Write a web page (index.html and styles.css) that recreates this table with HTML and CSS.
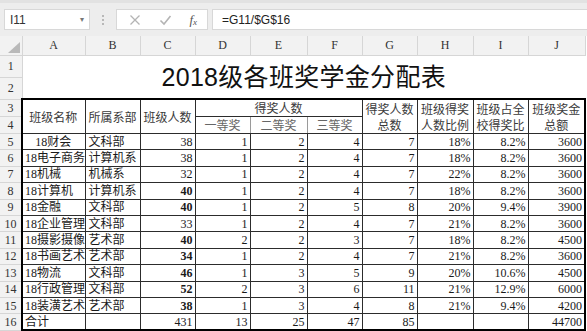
FILE: index.html
```html
<!DOCTYPE html>
<html lang="zh-CN">
<head>
<meta charset="utf-8">
<title>2018级各班奖学金分配表</title>
<link rel="stylesheet" href="styles.css">
</head>
<body>
<div class="app">
  <div class="toolbar">
    <div class="namebox"><span>I11</span><span class="caret">▾</span></div>
    <div class="grip"><span></span><span></span><span></span></div>
    <div class="fxbox">
      <svg width="12" height="12" viewBox="0 0 12 12"><path d="M1.5 1.5 L10.5 10.5 M10.5 1.5 L1.5 10.5" stroke="#b4b4b4" stroke-width="1.3" fill="none"/></svg>
      <svg width="13" height="12" viewBox="0 0 13 12"><path d="M1.5 6.5 L5 10 L11.5 2" stroke="#b4b4b4" stroke-width="1.6" fill="none"/></svg>
      <span class="fx">f<sub>x</sub></span>
    </div>
    <div class="formula">=G11/$G$16</div>
  </div>
  <table class="sheet">
    <colgroup>
      <col class="c-rn"><col class="c-a"><col class="c-b"><col class="c-b"><col class="c-b"><col class="c-e"><col class="c-b"><col class="c-b"><col class="c-h"><col class="c-b"><col class="c-e">
    </colgroup>
    <tr class="hdr">
      <th class="corner"><svg width="12" height="11" viewBox="0 0 12 11"><path d="M12 0 L12 11 L0 11 Z" fill="#b9b9b9"/></svg></th>
      <th>A</th><th>B</th><th>C</th><th>D</th><th>E</th><th>F</th><th>G</th><th>H</th><th>I</th><th>J</th>
    </tr>
    <tr class="tr">
      <td class="rn">1</td>
      <td class="title" colspan="10" rowspan="2">2018级各班奖学金分配表</td>
    </tr>
    <tr class="tr">
      <td class="rn">2</td>
    </tr>
    <tr class="dr">
      <td class="rn">3</td>
      <td class="h l t" rowspan="2">班级名称</td>
      <td class="h t" rowspan="2">所属系部</td>
      <td class="h t" rowspan="2">班级人数</td>
      <td class="h t sub-top" colspan="3">得奖人数</td>
      <td class="h t" rowspan="2">得奖人数<br>总数</td>
      <td class="h t" rowspan="2">班级得奖<br>人数比例</td>
      <td class="h t" rowspan="2">班级占全<br>校得奖比</td>
      <td class="h t r" rowspan="2">班级奖金<br>总额</td>
    </tr>
    <tr class="dr">
      <td class="rn">4</td>
      <td class="h sub">一等奖</td>
      <td class="h sub">二等奖</td>
      <td class="h sub">三等奖</td>
    </tr>
    <tr class="dr">
      <td class="rn">5</td><td class="l ctr">18财会</td><td class="gb">文科部</td><td class="n">38</td><td class="n">1</td><td class="n">2</td><td class="n gb">4</td><td class="n">7</td><td class="n">18%</td><td class="n">8.2%</td><td class="n r">3600</td>
    </tr>
    <tr class="dr">
      <td class="rn">6</td><td class="l">18电子商务</td><td class="gb">计算机系</td><td class="n">38</td><td class="n">1</td><td class="n">2</td><td class="n gb">4</td><td class="n">7</td><td class="n">18%</td><td class="n">8.2%</td><td class="n r">3600</td>
    </tr>
    <tr class="dr">
      <td class="rn">7</td><td class="l">18机械</td><td class="gb">机械系</td><td class="n">32</td><td class="n">1</td><td class="n">2</td><td class="n gb">4</td><td class="n">7</td><td class="n">22%</td><td class="n">8.2%</td><td class="n r">3600</td>
    </tr>
    <tr class="dr">
      <td class="rn">8</td><td class="l">18计算机</td><td class="gb">计算机系</td><td class="n bd">40</td><td class="n">1</td><td class="n">2</td><td class="n gb">4</td><td class="n">7</td><td class="n">18%</td><td class="n">8.2%</td><td class="n r">3600</td>
    </tr>
    <tr class="dr">
      <td class="rn">9</td><td class="l">18金融</td><td class="gb">文科部</td><td class="n bd">40</td><td class="n">1</td><td class="n">2</td><td class="n gb">5</td><td class="n">8</td><td class="n">20%</td><td class="n">9.4%</td><td class="n r">3900</td>
    </tr>
    <tr class="dr">
      <td class="rn">10</td><td class="l">18企业管理</td><td class="gb">文科部</td><td class="n">33</td><td class="n">1</td><td class="n">2</td><td class="n gb">4</td><td class="n">7</td><td class="n">21%</td><td class="n">8.2%</td><td class="n r">3600</td>
    </tr>
    <tr class="dr">
      <td class="rn">11</td><td class="l">18摄影摄像</td><td class="gb">艺术部</td><td class="n bd">40</td><td class="n">2</td><td class="n">2</td><td class="n gb">3</td><td class="n">7</td><td class="n">18%</td><td class="n">8.2%</td><td class="n r">4500</td>
    </tr>
    <tr class="dr">
      <td class="rn">12</td><td class="l">18书画艺术</td><td class="gb">艺术部</td><td class="n bd">34</td><td class="n">1</td><td class="n">2</td><td class="n gb">4</td><td class="n">7</td><td class="n">21%</td><td class="n">8.2%</td><td class="n r">3600</td>
    </tr>
    <tr class="dr">
      <td class="rn">13</td><td class="l">18物流</td><td class="gb">文科部</td><td class="n bd">46</td><td class="n">1</td><td class="n">3</td><td class="n gb">5</td><td class="n">9</td><td class="n">20%</td><td class="n">10.6%</td><td class="n r">4500</td>
    </tr>
    <tr class="dr">
      <td class="rn">14</td><td class="l">18行政管理</td><td class="gb">文科部</td><td class="n bd">52</td><td class="n">2</td><td class="n">3</td><td class="n gb">6</td><td class="n">11</td><td class="n">21%</td><td class="n">12.9%</td><td class="n r">6000</td>
    </tr>
    <tr class="dr">
      <td class="rn">15</td><td class="l">18装潢艺术</td><td class="gb">艺术部</td><td class="n bd">38</td><td class="n">1</td><td class="n">3</td><td class="n gb">4</td><td class="n">8</td><td class="n">21%</td><td class="n">9.4%</td><td class="n r">4200</td>
    </tr>
    <tr class="dr">
      <td class="rn">16</td><td class="l b">合计</td><td class="gb b"></td><td class="n b">431</td><td class="n b">13</td><td class="n b">25</td><td class="n gb b">47</td><td class="n b">85</td><td class="n b"></td><td class="n b"></td><td class="n r b">44700</td>
    </tr>
  </table>
</div>
</body>
</html>
```

FILE: styles.css
```css
* {
  box-sizing: border-box;
}

html, body {
  margin: 0;
  padding: 0;
}

body {
  width: 587px;
  height: 331px;
  overflow: hidden;
  background: #ffffff;
  font-family: "Liberation Serif", "Noto Sans CJK SC", serif;
  color: #1a1a1a;
}

.app {
  width: 587px;
}

/* ---------- formula toolbar ---------- */
.toolbar {
  height: 36px;
  background: #ededed;
  border-top: 3px solid #e2e2e2;
  display: flex;
  align-items: flex-start;
  padding: 6px 0 0 4px;
}

.namebox {
  width: 86px;
  height: 21px;
  background: #ffffff;
  border: 1px solid #d8d8d8;
  display: flex;
  align-items: center;
  justify-content: space-between;
  padding: 0 5px 0 5px;
  font: 12px "Liberation Sans", "Noto Sans", sans-serif;
  color: #333333;
}

.caret {
  font-size: 8px;
  color: #777777;
}

.grip {
  width: 26px;
  height: 21px;
  display: flex;
  flex-direction: column;
  align-items: center;
  justify-content: center;
  gap: 2px;
}

.grip span {
  width: 2px;
  height: 2px;
  background: #b8b8b8;
}

.fxbox {
  width: 92px;
  height: 21px;
  background: #ffffff;
  border: 1px solid #d8d8d8;
  display: flex;
  align-items: center;
  justify-content: space-between;
  padding: 0 10px 0 12px;
}

.fx {
  font: italic 13px "Liberation Serif", serif;
  color: #555555;
  line-height: 1;
}

.fx sub {
  font-size: 9px;
  vertical-align: -1px;
}

.formula {
  flex: 1;
  height: 21px;
  margin-left: 4px;
  background: #ffffff;
  border: 1px solid #d8d8d8;
  border-right: none;
  padding-left: 9px;
  display: flex;
  align-items: center;
  font: 12px "Liberation Sans", "Noto Sans", sans-serif;
  color: #222222;
}

/* ---------- sheet ---------- */
.sheet {
  border-collapse: collapse;
  table-layout: fixed;
  width: 585px;
}

.c-rn { width: 22px; }
.c-a { width: 63px; }
.c-b { width: 55px; }
.c-e { width: 57px; }
.c-h { width: 56px; }

.sheet td,
.sheet th {
  padding: 0 3px;
  overflow: hidden;
  white-space: nowrap;
  font-size: 12px;
  line-height: 14px;
  font-weight: normal;
}

.hdr th {
  height: 19px;
  background: #f2f2f2;
  border: 1px solid #d6d6d6;
  border-top: none;
  color: #333333;
  text-align: center;
  font-family: "Liberation Serif", serif;
  font-size: 12px;
}

.hdr th.corner {
  padding: 0 2px 2px 0;
  text-align: right;
  vertical-align: bottom;
  border-left: none;
}

.corner svg {
  display: block;
  margin-left: auto;
}

.rn {
  background: #f2f2f2;
  border: 1px solid #d6d6d6;
  border-left: none;
  text-align: center;
  color: #333333;
  font-family: "Liberation Serif", serif;
}

.sheet td.rn {
  padding: 0;
}

.tr td {
  height: 22px;
}

.dr td {
  height: 16.4px;
}

.title {
  text-align: center;
  vertical-align: middle;
  font-family: "Liberation Sans", "Noto Sans CJK SC", sans-serif;
  color: #111111;
  border: none;
}

.sheet td.title {
  font-size: 25px;
  line-height: 30px;
  letter-spacing: 0.3px;
}

/* body cells */
.dr td:not(.rn) {
  border: 1px solid #2c2c2c;
  color: #1a1a1a;
}

.dr td.h {
  text-align: center;
  color: #3a3a3a;
  font-family: "Noto Sans CJK SC", sans-serif;
  line-height: 16px;
}

.dr td.sub {
  color: #666666;
  border-top-color: #9a9a9a;
  border-left-color: #9a9a9a;
  border-right-color: #9a9a9a;
}

.dr td.gb {
  border-left-color: #8a8a8a;
}

.dr td.n {
  text-align: right;
  padding-right: 2px;
}

.dr td.bd {
  font-weight: bold;
}

.dr td.ctr {
  text-align: center;
}

.dr td.l {
  border-left: 2px solid #000000;
  padding-left: 2px;
}

.dr td.r {
  border-right: 2px solid #000000;
}

.dr td.t {
  border-top: 2px solid #000000;
}

.dr td.b {
  border-bottom: 2px solid #000000;
}
```
